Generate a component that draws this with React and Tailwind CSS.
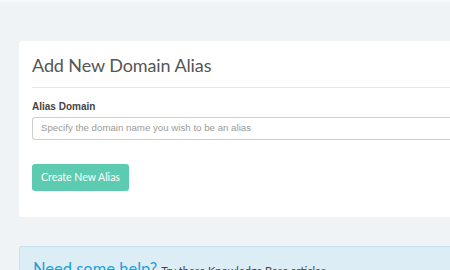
export default function App() {
  return (
    <div className="h-[270px] w-[450px] overflow-hidden bg-[#eff3f6] font-['Lato',sans-serif]">
      <div className="h-[2px] bg-[#f6f8fa]" />
      <div className="pl-[19px] pt-[39px]">
        <div className="rounded-l-[3px] bg-white pb-[26px] pl-[13px]">
          <h2 className="pt-[11px] pb-[9px] text-[18px] leading-[26px] text-[#555] tracking-[-0.1px]">
            Add New Domain Alias
          </h2>
          <div className="border-t border-[#e6e6e6]" />
          <label className="mt-[12px] block font-['Liberation_Sans',sans-serif] text-[10px] font-bold leading-[14px] text-[#444]">
            Alias Domain
          </label>
          <div className="mt-[3px] flex h-[23px] items-center rounded-l-[3px] border border-r-0 border-[#cfcfcf] pl-[8px] font-['Liberation_Sans',sans-serif] text-[9.7px] text-[#9a9a9a]">
            Specify the domain name you wish to be an alias
          </div>
          <button className="mt-[24px] flex h-[27px] w-[97px] items-center justify-center rounded-[3px] bg-[#5ccbb0] text-[10.5px] text-white">
            Create New Alias
          </button>
        </div>
        <div className="mt-[29px] h-[40px] whitespace-nowrap rounded-l-[3px] border border-r-0 border-[#c2e3ef] bg-[#dcedf5] pl-[13px] pt-[10px]">
          <span className="text-[16.5px] leading-[24px] text-[#1f9fd8]">Need some help?</span>{' '}
          <span className="text-[11px] text-[#444]">Try these Knowledge Base articles</span>
        </div>
      </div>
    </div>
  );
}
